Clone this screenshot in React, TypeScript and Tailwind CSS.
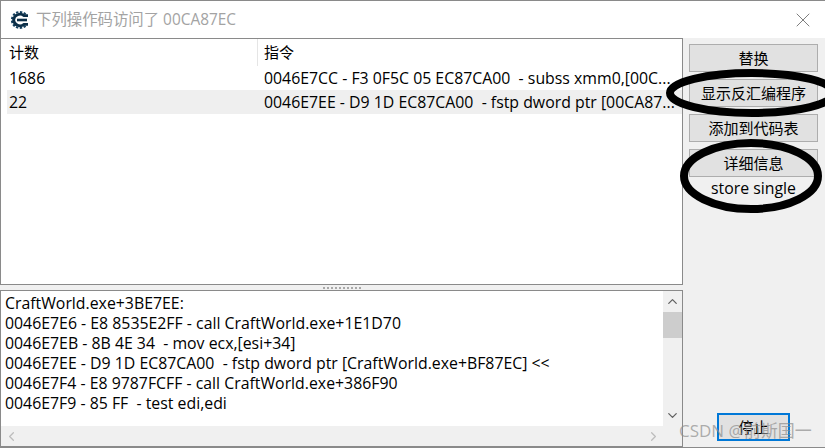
import { ChevronDown, ChevronLeft, ChevronRight, ChevronUp, X } from "lucide-react";

const FONT = "font-['Open_Sans','Noto_Sans_CJK_SC',sans-serif]";

const rows = [
  { count: "1686", text: "0046E7CC - F3 0F5C 05 EC87CA00  - subss xmm0,[00C...", selected: false },
  { count: "22", text: "0046E7EE - D9 1D EC87CA00  - fstp dword ptr [00CA87...", selected: true },
];

const lines = [
  "CraftWorld.exe+3BE7EE:",
  "0046E7E6 - E8 8535E2FF - call CraftWorld.exe+1E1D70",
  "0046E7EB - 8B 4E 34  - mov ecx,[esi+34]",
  "0046E7EE - D9 1D EC87CA00  - fstp dword ptr [CraftWorld.exe+BF87EC] <<",
  "0046E7F4 - E8 9787FCFF - call CraftWorld.exe+386F90",
  "0046E7F9 - 85 FF  - test edi,edi",
];

// gear shaped C with a bar through the middle
function Logo() {
  return (
    <svg width="18" height="18" viewBox="0 0 18 18" className="shrink-0">
      <path
        d="M14.6 3.4A8 8 0 1 0 14.6 14.6"
        fill="none"
        stroke="#14405f"
        strokeWidth="2"
        strokeDasharray="2.4 1.5"
      />
      <path
        d="M17 4.6H13A6.4 6.4 0 0 0 2.6 9A6.4 6.4 0 0 0 13 13.4H17"
        fill="none"
        stroke="#0c2f48"
        strokeWidth="2.8"
      />
      <path d="M6 9H16" stroke="#0c2f48" strokeWidth="2.6" />
    </svg>
  );
}

function SideButton({ label }: { label: string }) {
  return (
    <button className="h-[28px] w-[129px] shrink-0 border border-[#adadad] bg-[#e1e1e1] text-[15px] leading-none text-black">
      {label}
    </button>
  );
}

export default function App() {
  return (
    <div className={`relative flex h-[448px] w-[825px] flex-col overflow-hidden border-b border-[#8a8a8a] bg-[#f0f0f0] ${FONT}`}>
      {/* title bar */}
      <div className="flex h-[38px] shrink-0 items-center border-l border-t border-[#8a8a8a] bg-white pl-[10px] pr-[10px]">
        <Logo />
        <span className="ml-[7px] flex-1 text-[15.4px] text-[#a3a3a3]">下列操作码访问了 00CA87EC</span>
        <X size={24} strokeWidth={0.9} className="text-[#6f6f6f]" />
      </div>

      <div className="flex min-h-0 flex-1">
        <div className="flex w-[683px] shrink-0 flex-col">
          {/* list of instructions */}
          <div className="h-[247px] shrink-0 border border-[#8a8a8a] bg-white">
            <div className="flex h-[27px] text-[15px] text-black">
              <div className="flex w-[257px] items-center border-r border-[#e5e5e5] pl-[8px]">计数</div>
              <div className="flex flex-1 items-center pl-[6px]">指令</div>
            </div>
            <div className="pl-[6px]">
              {rows.map((row) => (
                <div
                  key={row.count}
                  className={`flex h-[24px] items-center pt-[1px] text-[15.85px] text-black ${row.selected ? "bg-[#efefef]" : ""}`}
                >
                  <span className="w-[257px] pl-[2px]">{row.count}</span>
                  <span className="whitespace-pre">{row.text}</span>
                </div>
              ))}
            </div>
          </div>

          {/* splitter grip */}
          <div className="flex h-[5px] shrink-0 items-center justify-center">
            <div className="h-[2px] w-[38px] border-t-2 border-dotted border-[#a8a8a8]" />
          </div>

          {/* disassembly memo */}
          <div className="flex min-h-0 flex-1 flex-col border border-[#8a8a8a] bg-white">
            <div className="flex min-h-0 flex-1">
              <div className="min-w-0 flex-1 whitespace-pre pl-[4px] pt-[2px] text-[15.85px] leading-[20px] text-black">
                {lines.map((line) => (
                  <div key={line}>{line}</div>
                ))}
              </div>
              <div className="flex w-[19px] shrink-0 flex-col items-center justify-between bg-[#f0f0f0]">
                <div className="flex w-full flex-col items-center">
                  <ChevronUp size={15} strokeWidth={2} className="my-[3px] text-[#606060]" />
                  <div className="h-[26px] w-full bg-[#cdcdcd]" />
                </div>
                <ChevronDown size={15} strokeWidth={2} className="mb-[3px] text-[#606060]" />
              </div>
            </div>
            <div className="flex h-[20px] shrink-0 items-center justify-between bg-[#f0f0f0] pl-[3px] pr-[21px]">
              <ChevronLeft size={15} strokeWidth={2} className="text-[#bdbdbd]" />
              <ChevronRight size={15} strokeWidth={2} className="text-[#bdbdbd]" />
            </div>
          </div>
        </div>

        {/* right side buttons */}
        <div className="flex min-w-0 flex-1 flex-col items-start pb-[6px] pl-[6px] pt-[6px]">
          <div className="flex flex-col gap-[7px]">
            <SideButton label="替换" />
            <SideButton label="显示反汇编程序" />
            <SideButton label="添加到代码表" />
            <SideButton label="详细信息" />
          </div>
          <div className="w-[129px] pt-[1px] text-center text-[15.85px] leading-[20px] text-black">store single</div>
          <button className="mt-auto ml-[28px] h-[28px] w-[73px] border-2 border-[#0078d7] bg-[#e1e1e1] text-[15px] leading-none text-black">
            停止
          </button>
        </div>
      </div>

      {/* hand-drawn marks on the screenshot */}
      <svg width="825" height="448" className="pointer-events-none absolute left-0 top-0">
        <ellipse cx="752" cy="93" rx="82" ry="20" fill="none" stroke="#000" strokeWidth="8" />
        <ellipse cx="751" cy="176" rx="67" ry="33" fill="none" stroke="#000" strokeWidth="8" />
      </svg>

      {/* watermark */}
      <div className="pointer-events-none absolute left-[679px] top-[418px] text-[17px] text-[#8c8c8c]/70">
        CSDN @前斯国一
      </div>
    </div>
  );
}
